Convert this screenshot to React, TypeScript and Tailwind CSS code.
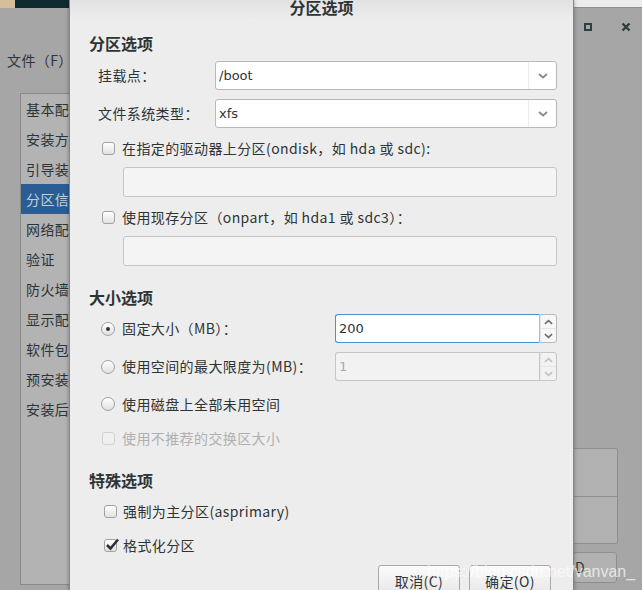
const LEFT_ITEMS = ["基本配", "安装方", "引导装", "分区信", "网络配", "验证", "防火墙", "显示配", "软件包", "预安装", "安装后"];

const SELECTED = "分区信";

function Chevron({ up, color, w = 10 }: { up?: boolean; color: string; w?: number }) {
  return (
    <svg width={w} height="6" viewBox="0 0 10 6" fill="none">
      <path d={up ? "M1 5 L5 1.5 L9 5" : "M1 1 L5 4.5 L9 1"} stroke={color} strokeWidth="1.8" />
    </svg>
  );
}

function Check({ checked, disabled }: { checked?: boolean; disabled?: boolean }) {
  return (
    <span
      className={`relative shrink-0 w-[13px] h-[13px] rounded-[3px] border ${
        disabled ? "border-[#d2d2d2] bg-[#efefef]" : "border-[#a2a2a2] bg-gradient-to-b from-white to-[#e2e2e2]"
      }`}
    >
      {checked && (
        <svg className="absolute -top-[3px] left-[0px]" width="15" height="15" viewBox="0 0 15 15" fill="none">
          <path d="M2 8 L5.5 11.5 L13 2.5" stroke="#2e3436" strokeWidth="2.6" />
        </svg>
      )}
    </span>
  );
}

function Radio({ on }: { on?: boolean }) {
  return (
    <span className="shrink-0 w-[14px] h-[14px] rounded-full border border-[#a0a0a0] bg-gradient-to-b from-white to-[#e0e0e0] flex items-center justify-center">
      {on && <span className="w-[4px] h-[4px] rounded-full bg-[#2e3436]" />}
    </span>
  );
}

function Combo({ value }: { value: string }) {
  return (
    <div className="flex-1 h-[29px] flex bg-white border border-[#b9b9b9] rounded-[3px]">
      <div className="flex-1 flex items-center pl-[3px] tracking-normal font-['DejaVu_Sans','Noto_Sans_CJK_SC',sans-serif] text-[13px]">{value}</div>
      <div className="w-[28px] flex items-center justify-center border-l border-[#ececec]">
        <Chevron color="#8a8a8a" />
      </div>
    </div>
  );
}

function Spin({ value, disabled }: { value: string; disabled?: boolean }) {
  const arrow = disabled ? "#c2c2c2" : "#6e6e6e";
  return (
    <div className="flex-1 h-[29px] flex">
      <div
        className={`flex-1 flex items-center pl-[3px] rounded-l-[3px] border border-r-0 tracking-normal font-['DejaVu_Sans','Noto_Sans_CJK_SC',sans-serif] text-[13px] ${
          disabled ? "bg-[#f2f2f2] border-[#c6c6c6] text-[#a9a9a9]" : "bg-white border-[#4a90d9]"
        }`}
      >
        {value}
      </div>
      <div
        className={`w-[18px] flex flex-col rounded-r-[3px] border ${
          disabled ? "bg-[#f2f2f2] border-[#c6c6c6]" : "bg-[#f7f7f7] border-[#b9b9b9]"
        }`}
      >
        <div className="flex-1 flex items-center justify-center border-l border-b border-[#e6e6e6]">
          <Chevron up color={arrow} w={9} />
        </div>
        <div className="flex-1 flex items-center justify-center border-l border-[#e6e6e6]">
          <Chevron color={arrow} w={9} />
        </div>
      </div>
    </div>
  );
}

export default function App() {
  return (
    <div className="relative w-[642px] h-[590px] overflow-hidden bg-[#a6a6a6] text-[14px] tracking-[0.4px] text-[#2e3436] font-['Noto_Sans_CJK_SC',sans-serif]">
      {/* main installer window behind */}
      <div className="flex flex-col h-full">
        <div className="flex h-[8px] shrink-0">
          <div className="w-[15px] bg-[#d6bf98]" />
          <div className="flex-1 bg-[#0f2b30]" />
          <div className="w-[69px] bg-[#ececec] border-b border-[#8f8f8f]" />
        </div>
        <div className="flex flex-1">
          <div className="w-[130px] flex flex-col">
            <div className="mt-[42px] h-[20px] flex items-center pl-[7px]">文件（F）</div>
            <div className="mt-[23px] ml-[20px] h-[492px] bg-[#b3b3b3] border border-[#8a8a8a]">
              {LEFT_ITEMS.map((it) => (
                <div
                  key={it}
                  className={`h-[30px] flex items-center pl-[5px] ${it === SELECTED ? "bg-[#2a5d94] text-[#c5d0dc]" : ""}`}
                >
                  {it}
                </div>
              ))}
            </div>
          </div>
          <div className="flex-1" />
          <div className="w-[69px] flex flex-col">
            <div className="mt-[9px] h-[20px] flex items-center">
              <span className="ml-[11px] w-[8px] h-[8px] border-2 border-[#2e3d42]" />
              <svg className="ml-[29px]" width="10" height="10" viewBox="0 0 10 10">
                <path d="M1.5 1.5 L8.5 8.5 M8.5 1.5 L1.5 8.5" stroke="#2e3d42" strokeWidth="2.4" />
              </svg>
            </div>
            <div className="mt-[411px] w-[45px] h-[96px] flex flex-col bg-[#b1b1b1] border border-[#8e8e8e] rounded-r-[2px]">
              <div className="h-[48px] border-b border-[#8e8e8e]" />
            </div>
            <div className="mt-[8px] w-[44px] h-[31px] flex items-center pl-[1px] bg-[#b1b1b1] border border-[#8e8e8e] rounded-[3px]">
              D
            </div>
          </div>
        </div>
      </div>

      {/* dialog window */}
      <div className="absolute left-[69px] top-0 w-[505px] h-[600px] flex flex-col bg-[#ededed] border-l border-r border-[#858585] shadow-[0_0_4px_rgba(0,0,0,0.35)]">
        <div className="h-[20px] shrink-0 flex justify-center bg-gradient-to-b from-[#e2e2e2] to-[#ededed]">
          <span className="-mt-[2px] leading-[18px] text-[16px] font-bold tracking-normal">分区选项</span>
        </div>

        <div className="mt-[13px] h-[20px] flex items-center pl-[19px] text-[16px] font-bold tracking-normal">分区选项</div>

        <div className="mt-[8px] flex items-center pl-[28px] pr-[16px]">
          <span className="w-[117px]">挂载点：</span>
          <Combo value="/boot" />
        </div>
        <div className="mt-[9px] flex items-center pl-[28px] pr-[16px]">
          <span className="w-[117px]">文件系统类型：</span>
          <Combo value="xfs" />
        </div>

        <div className="mt-[10px] h-[20px] flex items-center gap-[7px] pl-[32px]">
          <Check />
          <span>在指定的驱动器上分区(ondisk，如 hda 或 sdc):</span>
        </div>
        <div className="mt-[9px] ml-[53px] mr-[16px] h-[30px] bg-[#f4f4f4] border border-[#c6c6c6] rounded-[3px]" />

        <div className="mt-[10px] h-[20px] flex items-center gap-[7px] pl-[32px]">
          <Check />
          <span>使用现存分区（onpart，如 hda1 或 sdc3）：</span>
        </div>
        <div className="mt-[9px] ml-[53px] mr-[16px] h-[30px] bg-[#f4f4f4] border border-[#c6c6c6] rounded-[3px]" />

        <div className="mt-[21px] h-[20px] flex items-center pl-[19px] text-[16px] font-bold tracking-normal">大小选项</div>

        <div className="mt-[7px] flex items-center pl-[31px] pr-[16px]">
          <div className="w-[234px] flex items-center gap-[7px]">
            <Radio on />
            <span>固定大小（MB）：</span>
          </div>
          <Spin value="200" />
        </div>
        <div className="mt-[9px] flex items-center pl-[31px] pr-[16px]">
          <div className="w-[234px] flex items-center gap-[7px]">
            <Radio />
            <span>使用空间的最大限度为(MB)：</span>
          </div>
          <Spin value="1" disabled />
        </div>
        <div className="mt-[13px] h-[20px] flex items-center gap-[7px] pl-[31px]">
          <Radio />
          <span>使用磁盘上全部未用空间</span>
        </div>
        <div className="mt-[14px] h-[20px] flex items-center gap-[7px] pl-[32px] text-[#b0b0b0]">
          <Check disabled />
          <span>使用不推荐的交换区大小</span>
        </div>

        <div className="mt-[22px] h-[20px] flex items-center pl-[19px] text-[16px] font-bold tracking-normal">特殊选项</div>

        <div className="mt-[11px] h-[20px] flex items-center gap-[6px] pl-[34px]">
          <Check />
          <span>强制为主分区(asprimary)</span>
        </div>
        <div className="mt-[14px] h-[20px] flex items-center gap-[6px] pl-[34px]">
          <Check checked />
          <span>格式化分区</span>
        </div>

        <div className="mt-[10px] flex justify-end gap-[9px] pr-[22px]">
          <button className="w-[82px] h-[32px] flex items-center justify-center rounded-[3px] border border-[#a8a8a8] bg-gradient-to-b from-[#fbfbfb] to-[#e6e6e6]">
            取消(C)
          </button>
          <button className="w-[82px] h-[32px] flex items-center justify-center rounded-[3px] border border-[#a8a8a8] bg-gradient-to-b from-[#fbfbfb] to-[#e6e6e6]">
            确定(O)
          </button>
        </div>
      </div>

      {/* watermark */}
      <div className="absolute left-[427px] top-[562px] text-[16px] leading-[20px] tracking-normal text-white/70 font-['Liberation_Sans',sans-serif]">
        https://blog.csdn.net/vanvan_
      </div>
    </div>
  );
}
